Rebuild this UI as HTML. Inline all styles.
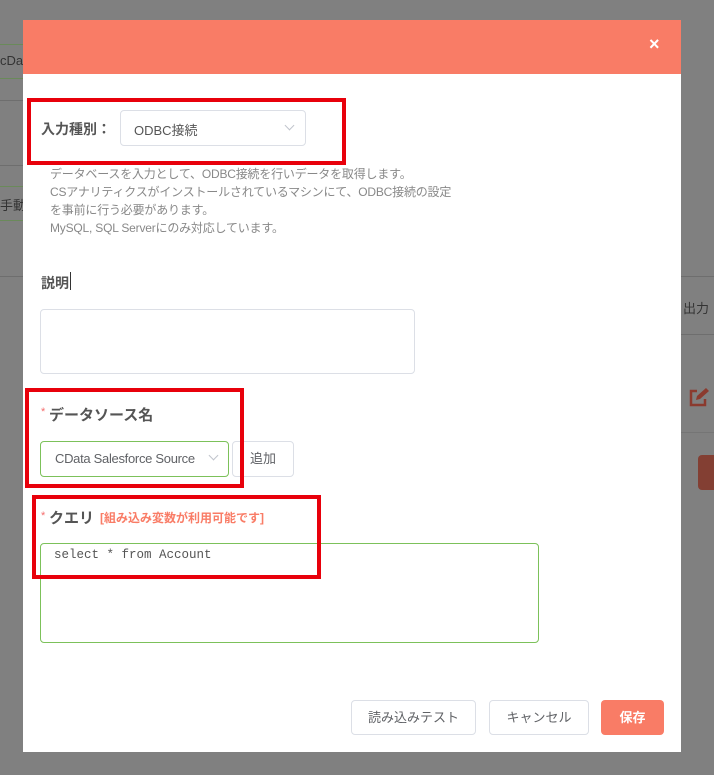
<!DOCTYPE html>
<html style="background:#808080"><head><meta charset="utf-8"><style>
*{box-sizing:border-box;margin:0;padding:0}
html,body{background:#808080}
body{width:714px;height:775px;position:relative;overflow:hidden;font-family:"Liberation Sans","Noto Sans CJK JP",sans-serif;font-size:13px;color:#606266}
.a{position:absolute}
.red{position:absolute;border:4px solid #e8000b}
.inp{position:absolute;background:#fff;border:1px solid #dcdfe6;border-radius:4px}
.lbl{position:absolute;font-weight:bold;color:#555;font-size:14px}
.chev{position:absolute;width:7px;height:7px;border-right:1px solid #c0c4cc;border-bottom:1px solid #c0c4cc;transform:rotate(45deg)}
.btn{position:absolute;border:1px solid #dcdfe6;border-radius:4px;background:#fff;text-align:center;font-size:13px;color:#606266}
</style></head><body>
<div class="a" style="left:0;top:0;width:714px;height:775px;background:#808080"></div>
<div class="a" style="left:0;top:44px;width:23px;height:35px;border-top:1px solid #6a8a5a;border-bottom:1px solid #6a8a5a"></div>
<div class="a" style="left:0;top:53px;color:#333;font-size:13px">cDat</div>
<div class="a" style="left:0;top:100px;width:23px;border-top:1px solid #6e6e6e"></div>
<div class="a" style="left:0;top:165px;width:23px;border-top:1px solid #6e6e6e"></div>
<div class="a" style="left:0;top:186px;width:23px;height:35px;border-top:1px solid #6a8a5a;border-bottom:1px solid #6a8a5a"></div>
<div class="a" style="left:0;top:195px;color:#333;font-size:13px">手動</div>
<div class="a" style="left:0;top:276px;width:23px;border-top:1px solid #6e6e6e"></div>
<div class="a" style="left:681px;top:276px;width:33px;border-top:1px solid #6e6e6e"></div>
<div class="a" style="left:683px;top:298px;color:#333;font-size:13px">出力</div>
<div class="a" style="left:681px;top:334px;width:33px;border-top:1px solid #6e6e6e"></div>
<div class="a" style="left:681px;top:432px;width:33px;border-top:1px solid #757575"></div>
<svg class="a" style="left:688px;top:388px" width="22" height="20" viewBox="0 0 22 20"><path d="M9 3H3v14h14v-6" fill="none" stroke="#8b3a2e" stroke-width="2.5"/><path d="M8 12l1-4 9-8 3 3-9 8z" fill="#8b3a2e"/></svg>
<div class="a" style="left:698px;top:455px;width:20px;height:35px;background:#833f33;border-radius:4px"></div>

<div class="a" style="left:23px;top:20px;width:658px;height:732px;background:#fff"></div>
<div class="a" style="left:23px;top:20px;width:658px;height:54px;background:#f97c66"></div>
<div class="a" style="left:649px;top:34px;color:#fff;font-size:18px;font-weight:bold">×</div>

<div class="lbl" style="left:41px;top:119px">入力種別：</div>
<div class="inp" style="left:120px;top:110px;width:186px;height:36px"></div>
<div class="a" style="left:134px;top:120px;font-size:13px;color:#555">ODBC接続</div>
<div class="chev" style="left:286px;top:122px"></div>
<div class="red" style="left:27px;top:98px;width:319px;height:67px"></div>

<div class="a" style="left:50px;top:165px;font-size:12px;line-height:18px;color:#888;letter-spacing:-0.2px">データベースを入力として、ODBC接続を行いデータを取得します。<br>CSアナリティクスがインストールされているマシンにて、ODBC接続の設定<br>を事前に行う必要があります。<br>MySQL, SQL Serverにのみ対応しています。</div>

<div class="lbl" style="left:41px;top:273px">説明</div>
<div class="a" style="left:70px;top:272px;width:1px;height:18px;background:#333"></div>
<div class="inp" style="left:40px;top:309px;width:375px;height:65px"></div>

<div class="a" style="left:41px;top:406px;color:#f56c6c;font-size:11px">*</div>
<div class="lbl" style="left:49px;top:404px;font-size:15px">データソース名</div>
<div class="inp" style="left:40px;top:441px;width:189px;height:36px;border-color:#7cc15a"></div>
<div class="a" style="left:55px;top:451px;font-size:13px;color:#606266;letter-spacing:-0.3px">CData Salesforce Source</div>
<div class="chev" style="left:210px;top:452px"></div>
<div class="btn" style="left:232px;top:441px;width:62px;height:36px;line-height:34px">追加</div>
<div class="red" style="left:25px;top:388px;width:219px;height:100px"></div>

<div class="a" style="left:41px;top:510px;color:#f56c6c;font-size:11px">*</div>
<div class="lbl" style="left:49px;top:507px;font-size:15px">クエリ</div>
<div class="a" style="left:100px;top:509px;font-size:12px;font-weight:bold;color:#f97c66">[組み込み変数が利用可能です]</div>
<div class="inp" style="left:40px;top:543px;width:499px;height:100px;border-color:#7cc15a"></div>
<div class="a" style="left:54px;top:548px;font-family:'Liberation Mono',monospace;font-size:12.5px;color:#555">select * from Account</div>
<div class="red" style="left:32px;top:495px;width:289px;height:84px"></div>

<div class="btn" style="left:351px;top:700px;width:125px;height:35px;line-height:33px">読み込みテスト</div>
<div class="btn" style="left:489px;top:700px;width:100px;height:35px;line-height:33px">キャンセル</div>
<div class="a" style="left:601px;top:700px;width:63px;height:35px;line-height:35px;background:#f97c66;border-radius:4px;color:#fff;text-align:center;font-weight:bold">保存</div>
</body></html>
